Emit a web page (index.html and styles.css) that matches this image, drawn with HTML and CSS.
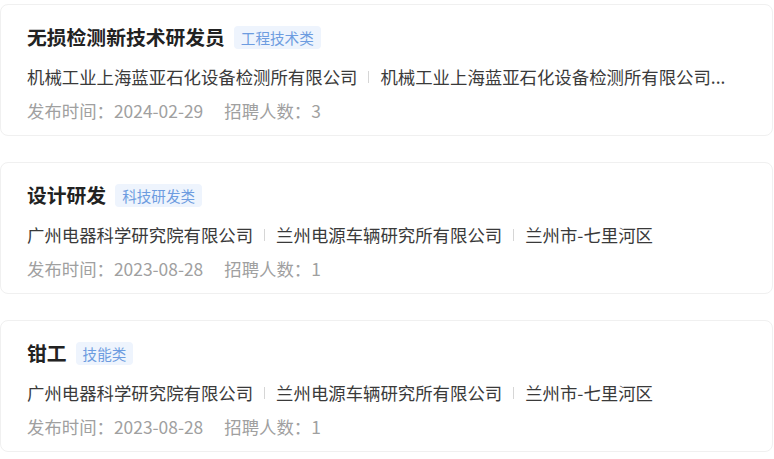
FILE: index.html
```html
<!DOCTYPE html>
<html lang="zh-CN">
<head>
    <meta charset="UTF-8">
    <meta name="viewport" content="width=device-width, initial-scale=1.0">
    <title>招聘岗位</title>
    <link rel="stylesheet" href="styles.css">
</head>
<body>
    <div class="job-list">
        <!-- 岗位 1 -->
        <div class="job-card">
            <div class="job-head">
                <h3 class="job-title">无损检测新技术研发员</h3>
                <span class="job-tag">工程技术类</span>
            </div>
            <div class="job-org">
                <span>机械工业上海蓝亚石化设备检测所有限公司</span><i class="sep"></i><span>机械工业上海蓝亚石化设备检测所有限公司...</span>
            </div>
            <div class="job-meta">
                <span>发布时间：2024-02-29</span>
                <span>招聘人数：3</span>
            </div>
        </div>

        <!-- 岗位 2 -->
        <div class="job-card">
            <div class="job-head">
                <h3 class="job-title">设计研发</h3>
                <span class="job-tag">科技研发类</span>
            </div>
            <div class="job-org">
                <span>广州电器科学研究院有限公司</span><i class="sep"></i><span>兰州电源车辆研究所有限公司</span><i class="sep"></i><span>兰州市-七里河区</span>
            </div>
            <div class="job-meta">
                <span>发布时间：2023-08-28</span>
                <span>招聘人数：1</span>
            </div>
        </div>

        <!-- 岗位 3 -->
        <div class="job-card">
            <div class="job-head">
                <h3 class="job-title">钳工</h3>
                <span class="job-tag">技能类</span>
            </div>
            <div class="job-org">
                <span>广州电器科学研究院有限公司</span><i class="sep"></i><span>兰州电源车辆研究所有限公司</span><i class="sep"></i><span>兰州市-七里河区</span>
            </div>
            <div class="job-meta">
                <span>发布时间：2023-08-28</span>
                <span>招聘人数：1</span>
            </div>
        </div>
    </div>
</body>
</html>
```
FILE: styles.css
```css
body {
    margin: 0;
    background: #fff;
    font-family: "Noto Sans CJK SC", "Noto Sans", sans-serif;
}
.job-list {
    display: flex;
    flex-direction: column;
    gap: 26px;
    padding: 4px 1px 0 0;
}
.job-card {
    height: 132px;
    box-sizing: border-box;
    padding: 18px 26px 0 26px;
    border: 1px solid #f0f0f0;
    border-radius: 8px;
    background: #fff;
}
.job-head {
    display: flex;
    align-items: center;
    gap: 9px;
    height: 28px;
}
.job-title {
    margin: 0;
    font-size: 19.8px;
    font-weight: bold;
    color: #222;
    line-height: 28px;
}
.job-tag {
    padding: 0 7px;
    height: 23px;
    line-height: 23px;
    font-size: 14.6px;
    color: #6d9ce0;
    background: #eef4fd;
    border-radius: 4px;
}
.job-org {
    margin-top: 13px;
    display: flex;
    align-items: center;
    height: 24px;
    font-size: 17.4px;
    color: #3a3a3a;
    white-space: nowrap;
}
.sep {
    flex: none;
    width: 1px;
    height: 12px;
    margin: 2px 11px 0 11px;
    background: #d6d6d6;
}
.job-meta {
    margin-top: 11px;
    display: flex;
    gap: 21px;
    height: 24px;
    line-height: 24px;
    font-size: 17.4px;
    color: #a0a0a0;
}
```
